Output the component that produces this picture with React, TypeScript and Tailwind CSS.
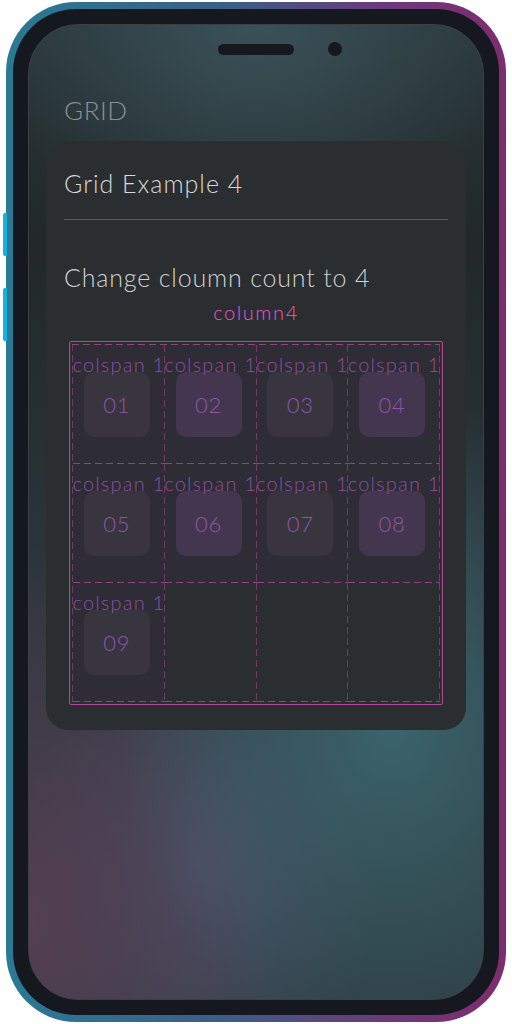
import React from "react";

const items = ["01", "02", "03", "04", "05", "06", "07", "08", "09"];

// dashed right + bottom edges of each cell, drawn as backgrounds so the dashes are long like the original
const dashEdges =
	"[background-image:repeating-linear-gradient(to_bottom,#74386a_0_7px,transparent_7px_11px),repeating-linear-gradient(to_right,#94417f_0_7px,transparent_7px_11px)] [background-size:1px_100%,100%_1px] [background-position:right_top,left_bottom] bg-no-repeat";

const Cell = ({ label, index }: { label?: string; index: number }) => (
	<div
		className={`relative h-[119px] flex items-center justify-center ${dashEdges} ${
			label ? "bg-[#2e2c34]" : ""
		}`}
	>
		{label && (
			<>
				<div
					className={`-translate-x-[2px] w-[66px] h-[65px] rounded-[10px] flex items-center justify-center text-[22px] tracking-[0.04em] text-[#8d55aa] ${
						index % 2 === 0 ? "bg-[#38353e]" : "bg-[#45364f]"
					}`}
				>
					{label}
				</div>
				<span className="absolute top-[7px] left-1/2 -translate-x-1/2 whitespace-nowrap text-[20px] leading-[24px] tracking-[0.06em] text-[#8b4fa3]">
					colspan 1
				</span>
			</>
		)}
	</div>
);

export default function App() {
	const cells = Array.from({ length: 12 }, (_, i) => items[i]);

	return (
		<div className="w-[512px] h-[1024px] bg-white font-['Lato','Noto_Sans',sans-serif] font-light">
			<div className="relative ml-[6px] pt-[2px]">
				{/* side buttons */}
				<div className="absolute -left-[3px] top-[213px] w-[4px] h-[43px] rounded-l-[2px] bg-[#16b2dc]" />
				<div className="absolute -left-[3px] top-[288px] w-[4px] h-[53px] rounded-l-[2px] bg-[#16b2dc]" />

				<div className="w-[500px] h-[1020px] rounded-[70px] p-[7px] bg-[linear-gradient(to_right,#2a7a94,#3d5c86_45%,#6a3a7c_75%,#7e2c6c)]">
					<div className="h-full rounded-[63px] p-[15px] bg-[#161820]">
						<div className="h-full rounded-[50px] overflow-hidden border border-[#3a4044] bg-[radial-gradient(60%_22%_at_50%_0%,#3a5158,transparent),radial-gradient(60%_34%_at_80%_72%,#3b646c,transparent),radial-gradient(55%_40%_at_0%_92%,#553e52,transparent),radial-gradient(40%_25%_at_38%_86%,#4b5068,transparent),linear-gradient(to_bottom,#2a373b_0%,#222829_22%,#2c363c_60%,#2e3f45_100%)]">
							{/* notch */}
							<div className="flex justify-center items-center gap-[34px] mt-[17px]">
								<div className="w-[14px]" />
								<div className="w-[76px] h-[11px] rounded-full bg-[#161820]" />
								<div className="w-[14px] h-[14px] rounded-full bg-[#161820]" />
							</div>

							<div className="px-[17px]">
								<h2 className="mt-[38px] pl-[18px] text-[26px] leading-[32px] tracking-[0.02em] text-[#8c9192]">
									GRID
								</h2>

								<div className="mt-[15px] rounded-[22px] bg-[#2b2e30] px-[18px] pt-[26px] pb-[25px]">
									<h3 className="text-[25px] leading-[32px] tracking-[0.04em] text-[#d6d8d8]">
										Grid Example 4
									</h3>
									<div className="mt-[20px] h-px bg-[#595d5f]" />

									<p className="mt-[41px] text-[25px] leading-[32px] tracking-[0.033em] text-[#cfd1d1]">
										Change cloumn count to 4
									</p>
									<p className="mt-[6px] text-center text-[20px] leading-[26px] tracking-[0.08em] text-[#f252cb]">
										column4
									</p>

									<div className="mt-[16px] mx-[5px] border border-[#b8449a] rounded-[2px] p-[2px]">
										<div className="pt-px pl-px grid grid-cols-4 [background-image:repeating-linear-gradient(to_right,#94417f_0_7px,transparent_7px_11px),repeating-linear-gradient(to_bottom,#74386a_0_7px,transparent_7px_11px)] [background-size:100%_1px,1px_100%] [background-position:left_top,left_top] bg-no-repeat">
											{cells.map((c, i) => (
												<Cell key={i} label={c} index={i} />
											))}
										</div>
									</div>
								</div>
							</div>
						</div>
					</div>
				</div>
			</div>
		</div>
	);
}
